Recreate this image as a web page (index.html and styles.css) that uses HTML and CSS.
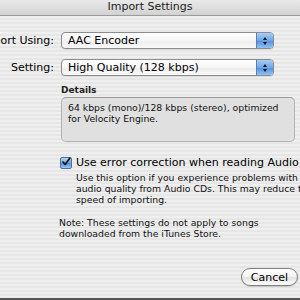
FILE: index.html
```html
<!DOCTYPE html>
<html lang="en">
<head>
    <meta charset="UTF-8">
    <title>Import Settings</title>
    <link rel="stylesheet" href="styles.css">
</head>
<body>
    <div class="window">
        <div class="titlebar">Import Settings</div>
        <div class="content">
            <div class="row first">
                <div class="label"><span>Import Using:</span></div>
                <div class="popup">
                    <span class="popup-text">AAC Encoder</span>
                    <span class="stepper"><i class="up"></i><i class="down"></i></span>
                </div>
            </div>
            <div class="row">
                <div class="label"><span>Setting:</span></div>
                <div class="popup">
                    <span class="popup-text">High Quality (128 kbps)</span>
                    <span class="stepper"><i class="up"></i><i class="down"></i></span>
                </div>
            </div>

            <div class="details">
                <div class="details-title">Details</div>
                <div class="details-box">64 kbps (mono)/128 kbps (stereo), optimized for Velocity Engine.</div>
            </div>

            <div class="check-row">
                <span class="checkbox">
                    <svg width="12" height="12" viewBox="0 0 12 12">
                        <path d="M2.5 6.2 L5 9 L10.5 1.5" fill="none" stroke="#111" stroke-width="2" stroke-linecap="round" stroke-linejoin="round"/>
                    </svg>
                </span>
                <span class="check-label">Use error correction when reading Audio CDs</span>
            </div>
            <div class="check-help">Use this option if you experience problems with the audio quality from Audio CDs. This may reduce the speed of importing.</div>

            <div class="note">Note: These settings do not apply to songs downloaded from the iTunes Store.</div>

            <div class="buttons">
                <button class="btn">Cancel</button>
            </div>
        </div>
        <div class="bottom-edge"></div>
    </div>
</body>
</html>
```

FILE: styles.css
```css
body {
    margin: 0;
    width: 300px;
    height: 300px;
    overflow: hidden;
    font-family: "DejaVu Sans", Verdana, sans-serif;
    color: #000;
}

.window {
    display: flex;
    flex-direction: column;
    height: 300px;
}

.titlebar {
    height: 15px;
    line-height: 13px;
    font-size: 11px;
    text-align: center;
    color: #1c1c1c;
    background: linear-gradient(#e9e9e9, #d2d2d2);
    border-bottom: 1px solid #9a9a9a;
    flex-shrink: 0;
}

.content {
    flex: 1;
    display: flex;
    flex-direction: column;
    overflow: hidden;
    background: repeating-linear-gradient(#efefef 0 2px, #e6e6e6 2px 4px);
}

.row {
    display: flex;
    align-items: center;
    height: 17px;
    margin-top: 10px;
}

.row.first {
    margin-top: 16px;
}

.label {
    width: 54px;
    flex-shrink: 0;
    display: flex;
    justify-content: flex-end;
    margin-right: 7px;
    font-size: 11px;
    white-space: nowrap;
}

.popup {
    width: 211px;
    height: 15px;
    display: flex;
    align-items: center;
    border: 1px solid #8c8c8c;
    border-radius: 4px;
    background: linear-gradient(#ffffff, #f6f6f6 50%, #ececec 51%, #fafafa);
    box-shadow: 0 1px 0 rgba(0, 0, 0, 0.08);
    overflow: hidden;
}

.popup-text {
    flex: 1;
    padding-left: 6px;
    font-size: 11px;
    white-space: nowrap;
}

.stepper {
    width: 16px;
    height: 15px;
    display: flex;
    flex-direction: column;
    align-items: center;
    justify-content: center;
    gap: 2px;
    border-left: 1px solid #5c7fae;
    background: linear-gradient(#a9cdf5, #6ea6e8 50%, #4f8fe0 51%, #8fc3f8);
}

.stepper i {
    width: 0;
    height: 0;
    border-left: 2.5px solid transparent;
    border-right: 2.5px solid transparent;
}

.stepper .up {
    border-bottom: 3px solid #111;
}

.stepper .down {
    border-top: 3px solid #111;
}

.details {
    margin-left: 61px;
    margin-top: 9px;
}

.details-title {
    font-size: 9px;
    font-weight: bold;
    line-height: 11px;
    color: #222;
}

.details-box {
    width: 226px;
    height: 36px;
    margin-top: 1px;
    padding: 4px 0 3px 6px;
    font-size: 9.3px;
    line-height: 11px;
    background: #e0e0e0;
    border: 1px solid #b4b4b4;
    border-top-color: #9c9c9c;
    border-radius: 5px;
    color: #111;
}

.check-row {
    display: flex;
    align-items: center;
    margin-left: 60px;
    margin-top: 14px;
    white-space: nowrap;
}

.checkbox {
    width: 12px;
    height: 12px;
    box-sizing: border-box;
    display: flex;
    border: 1px solid #4e6f9c;
    border-radius: 2px;
    background: linear-gradient(#b6d5f6, #6fa6e6 50%, #4f8ddc 51%, #9ccaf7);
    margin-right: 4px;
    flex-shrink: 0;
}

.checkbox svg {
    margin: -2px 0 0 0;
}

.check-label {
    font-size: 11px;
}

.check-help {
    margin-left: 76px;
    margin-top: 3px;
    width: 248px;
    flex-shrink: 0;
    font-size: 9.3px;
    line-height: 11px;
    color: #111;
}

.note {
    margin-left: 59px;
    margin-top: 12px;
    width: 210px;
    font-size: 9.3px;
    line-height: 11px;
    color: #111;
}

.buttons {
    display: flex;
    justify-content: flex-end;
    margin-top: auto;
    margin-bottom: 12px;
    padding-right: 2px;
}

.btn {
    width: 57px;
    height: 18px;
    padding: 0;
    font-family: inherit;
    font-size: 11px;
    color: #000;
    border: 1px solid #7e7e7e;
    border-radius: 9px;
    background: linear-gradient(#ffffff, #f2f2f2 50%, #e2e2e2 51%, #fbfbfb);
    box-shadow: 0 1px 1px rgba(0, 0, 0, 0.15);
}

.bottom-edge {
    height: 2px;
    background: #555;
    flex-shrink: 0;
}
```
